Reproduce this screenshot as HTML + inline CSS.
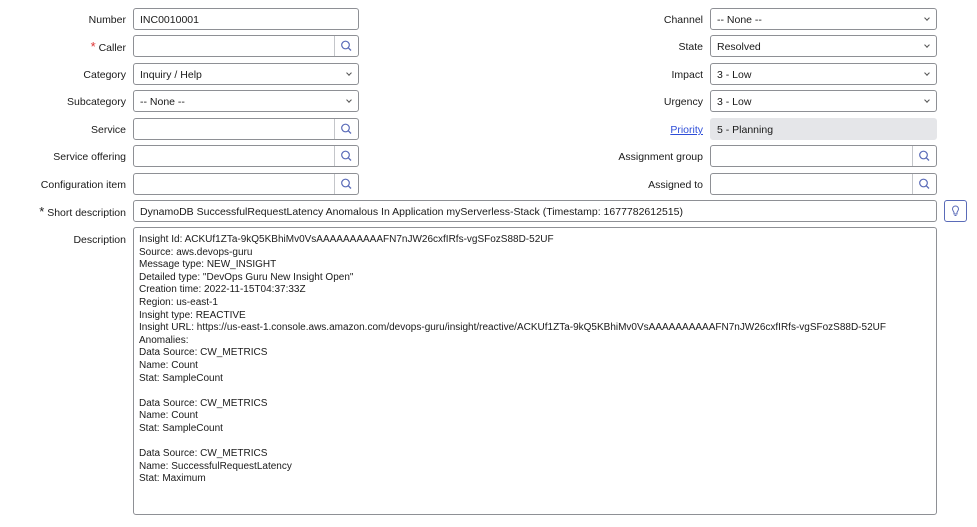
<!DOCTYPE html>
<html><head><style>
body{margin:0;background:#fff;font-family:"Liberation Sans",sans-serif;font-size:10.5px;color:#1a1a1a;}
.l{position:absolute;text-align:right;width:200px;line-height:22px;font-size:10.5px;padding-top:1px;}
.f{position:absolute;border:1px solid #8e9095;border-radius:3px;background:#fff;box-sizing:border-box;height:22px;line-height:21px;padding-top:1px;padding-left:6px;font-size:10.5px;}
.s::after{content:"";position:absolute;right:7px;top:7px;width:3px;height:3px;border-right:1px solid #555;border-bottom:1px solid #555;transform:rotate(45deg);}
.b{position:absolute;right:0;top:0;width:23px;height:20px;border-left:1px solid #c4c6ca;}
.ro{background:#e5e6e9;border-color:#e5e6e9;}
a{color:#2e4ed8;}
</style></head><body>
<svg width="0" height="0" style="position:absolute"><defs><g id="m"><circle cx="10.5" cy="9" r="3.8" fill="none" stroke="#5a6bb8" stroke-width="1.2"/><line x1="13.2" y1="11.7" x2="16" y2="14.5" stroke="#5a6bb8" stroke-width="1.3"/></g></defs></svg>

<div class="l" style="left:-74px;top:8px">Number</div><div class="f" style="left:133px;top:8px;width:226px">INC0010001</div>
<div class="l" style="left:-74px;top:35px"><span style="color:#d33;font-size:13px">*</span> Caller</div><div class="f" style="left:133px;top:35px;width:226px"><div class="b"><svg width="23" height="20"><use href="#m"/></svg></div></div>
<div class="l" style="left:-74px;top:63px">Category</div><div class="f s" style="left:133px;top:63px;width:226px">Inquiry / Help</div>
<div class="l" style="left:-74px;top:90px">Subcategory</div><div class="f s" style="left:133px;top:90px;width:226px">-- None --</div>
<div class="l" style="left:-74px;top:118px">Service</div><div class="f" style="left:133px;top:118px;width:226px"><div class="b"><svg width="23" height="20"><use href="#m"/></svg></div></div>
<div class="l" style="left:-74px;top:145px">Service offering</div><div class="f" style="left:133px;top:145px;width:226px"><div class="b"><svg width="23" height="20"><use href="#m"/></svg></div></div>
<div class="l" style="left:-74px;top:173px">Configuration item</div><div class="f" style="left:133px;top:173px;width:226px"><div class="b"><svg width="23" height="20"><use href="#m"/></svg></div></div>

<div class="l" style="left:503px;top:8px">Channel</div><div class="f s" style="left:710px;top:8px;width:227px">-- None --</div>
<div class="l" style="left:503px;top:35px">State</div><div class="f s" style="left:710px;top:35px;width:227px">Resolved</div>
<div class="l" style="left:503px;top:63px">Impact</div><div class="f s" style="left:710px;top:63px;width:227px">3 - Low</div>
<div class="l" style="left:503px;top:90px">Urgency</div><div class="f s" style="left:710px;top:90px;width:227px">3 - Low</div>
<div class="l" style="left:503px;top:118px"><a href="#">Priority</a></div><div class="f ro" style="left:710px;top:118px;width:227px">5 - Planning</div>
<div class="l" style="left:503px;top:145px">Assignment group</div><div class="f" style="left:710px;top:145px;width:227px"><div class="b"><svg width="23" height="20"><use href="#m"/></svg></div></div>
<div class="l" style="left:503px;top:173px">Assigned to</div><div class="f" style="left:710px;top:173px;width:227px"><div class="b"><svg width="23" height="20"><use href="#m"/></svg></div></div>

<div class="l" style="left:-74px;top:200px"><span style="font-size:13px">*</span> Short description</div><div class="f" style="left:133px;top:200px;width:804px">DynamoDB SuccessfulRequestLatency Anomalous In Application myServerless-Stack (Timestamp: 1677782612515)</div>
<div style="position:absolute;left:944px;top:200px;width:23px;height:22px;box-sizing:border-box;border:1px solid #5a6bb8;border-radius:3px"><svg width="21" height="20"><path d="M10.5 5a3 3 0 0 0-3 3c0 1.5 1.2 2.3 1.5 3.5v1.5h3v-1.5c.3-1.2 1.5-2 1.5-3.5a3 3 0 0 0-3-3zM9.5 14.5h2" fill="none" stroke="#5a6bb8" stroke-width="1"/></svg></div>

<div class="l" style="left:-74px;top:228px;line-height:22px">Description</div>
<div style="position:absolute;left:133px;top:227px;width:804px;height:288px;box-sizing:border-box;border:1px solid #8e9095;border-radius:3px;padding:6px 5px;font-size:10px;line-height:12.6px;white-space:pre;">Insight Id: ACKUf1ZTa-9kQ5KBhiMv0VsAAAAAAAAAAFN7nJW26cxfIRfs-vgSFozS88D-52UF
Source: aws.devops-guru
Message type: NEW_INSIGHT
Detailed type: "DevOps Guru New Insight Open"
Creation time: 2022-11-15T04:37:33Z
Region: us-east-1
Insight type: REACTIVE
Insight URL: https://us-east-1.console.aws.amazon.com/devops-guru/insight/reactive/ACKUf1ZTa-9kQ5KBhiMv0VsAAAAAAAAAAFN7nJW26cxfIRfs-vgSFozS88D-52UF
Anomalies:
Data Source: CW_METRICS
Name: Count
Stat: SampleCount

Data Source: CW_METRICS
Name: Count
Stat: SampleCount

Data Source: CW_METRICS
Name: SuccessfulRequestLatency
Stat: Maximum</div>
</body></html>
